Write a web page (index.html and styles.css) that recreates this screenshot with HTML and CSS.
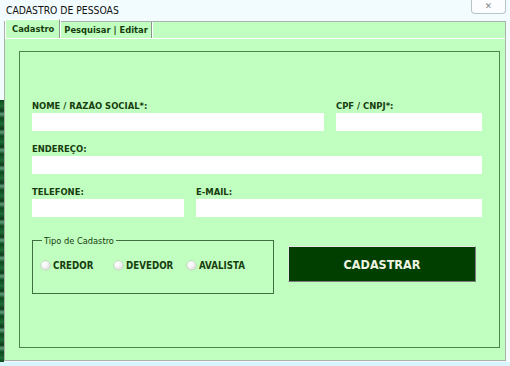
FILE: index.html
```html
<!DOCTYPE html>
<html lang="pt">
<head>
  <meta charset="UTF-8" />
  <title>Cadastro de Pessoas</title>
  <link rel="stylesheet" href="styles.css">
</head>
<body>
  <div class="desk">
    <div class="edge"></div>
    <div class="window">
      <div class="titlebar">
        <span class="title">CADASTRO DE PESSOAS</span>
        <div class="close">&#x2715;</div>
      </div>
      <div class="client">
        <div class="tabs">
          <div class="tab active">Cadastro</div>
          <div class="tab">Pesquisar | Editar</div>
        </div>
        <div class="page">
          <div class="frame">
            <div class="row">
              <div class="field nome">
                <label>NOME / RAZÃO SOCIAL*:</label>
                <input type="text" />
              </div>
              <div class="field cpf">
                <label>CPF / CNPJ*:</label>
                <input type="text" />
              </div>
            </div>
            <div class="row">
              <div class="field full">
                <label>ENDEREÇO:</label>
                <input type="text" />
              </div>
            </div>
            <div class="row">
              <div class="field fone">
                <label>TELEFONE:</label>
                <input type="text" />
              </div>
              <div class="field email">
                <label>E-MAIL:</label>
                <input type="text" />
              </div>
            </div>
            <div class="bottom">
              <fieldset class="tipo">
                <legend>Tipo de Cadastro</legend>
                <div class="opt"><span class="radio"></span>CREDOR</div>
                <div class="opt"><span class="radio"></span>DEVEDOR</div>
                <div class="opt"><span class="radio"></span>AVALISTA</div>
              </fieldset>
              <button class="btn">CADASTRAR</button>
            </div>
          </div>
        </div>
      </div>
    </div>
  </div>
</body>
</html>
```

FILE: styles.css
```css
body {
  margin: 0;
  background: #d6f6fb;
  font-family: "DejaVu Sans Condensed", "DejaVu Sans", sans-serif;
  color: #173d0e;
}
.desk {
  display: flex;
  width: 510px;
  height: 362px;
  background: #f2fbfd;
}
.edge {
  width: 4px;
  margin-top: 100px;
  background: repeating-linear-gradient(180deg, #0d4a1c 0, #1e6b34 6px, #0b3b16 11px, #5f9f78 14px, #0d4a1c 18px);
}
.window {
  flex: 1;
  display: flex;
  flex-direction: column;
}
.titlebar {
  height: 21px;
  display: flex;
  align-items: flex-start;
  justify-content: space-between;
}
.title {
  font-size: 10.3px;
  color: #111;
  margin: 4px 0 0 2px;
}
.close {
  width: 33px;
  height: 13px;
  margin-right: 4px;
  border: 1px solid #b9c4c8;
  border-top: none;
  border-radius: 0 0 4px 4px;
  background: #fbfdfe;
  color: #7f8487;
  font-size: 9px;
  font-weight: bold;
  line-height: 13px;
  text-align: center;
}
.client {
  width: 502px;
  height: 340px;
  background: #c0ffc0;
  border: 1px solid #a9b1ac;
  box-sizing: border-box;
  display: flex;
  flex-direction: column;
}
.tabs {
  display: flex;
  height: 16px;
}
.tab {
  font-size: 9.3px;
  font-weight: bold;
  padding: 2px 3px 0 4px;
  border-right: 1px solid #8c948e;
  box-shadow: 1px 0 0 #fff;
  white-space: nowrap;
}
.tab.active {
  margin-top: -3px;
  padding: 3px 5px 0 6px;
  background: #c0ffc0;
  border-top: 1px solid #fff;
  border-left: 1px solid #fff;
  position: relative;
  z-index: 1;
}
.page {
  flex: 1;
  border-top: 1px solid #fff;
  padding: 12px 5px 12px 14px;
  display: flex;
}
.frame {
  flex: 1;
  border: 1px solid #4b874b;
  padding: 47px 17px 0 12px;
}
.row {
  display: flex;
  gap: 12px;
  margin-bottom: 11px;
}
.field {
  display: flex;
  flex-direction: column;
  min-width: 0;
}
.field label {
  font-size: 9.4px;
  font-weight: bold;
  line-height: 14px;
  white-space: nowrap;
}
.field input {
  width: 100%;
  height: 18px;
  border: none;
  padding: 0;
  background: #fff;
  box-sizing: border-box;
}
.nome { width: 292px; }
.cpf { flex: 1; }
.full { flex: 1; }
.fone { width: 152px; }
.email { flex: 1; }
.bottom {
  display: flex;
  align-items: flex-start;
  margin-top: 18px;
  gap: 14px;
}
.tipo {
  margin: 0;
  width: 242px;
  height: 59px;
  box-sizing: border-box;
  border: 1px solid #3f6f3f;
  padding: 0 0 8px 8px;
  display: flex;
  align-items: center;
}
.tipo legend {
  font-size: 9.2px;
  padding: 0 2px;
  margin-left: 1px;
}
.opt {
  display: flex;
  align-items: center;
  width: 73px;
  font-size: 9.7px;
  font-weight: bold;
  white-space: nowrap;
}
.radio {
  width: 9px;
  height: 9px;
  border-radius: 50%;
  background: radial-gradient(circle at 40% 35%, #fff 0, #f2f2f2 40%, #c6c6c6 100%);
  box-shadow: 0 0 0 0.5px #b8b8b8;
  margin-right: 3px;
}
.btn {
  margin-top: 11px;
  width: 188px;
  height: 36px;
  background: #003f00;
  color: #eef3e2;
  font-family: inherit;
  font-size: 12.5px;
  font-weight: bold;
  border: 1px solid;
  border-color: #e6e6e6 #7c7c7c #7c7c7c #e6e6e6;
}
```
